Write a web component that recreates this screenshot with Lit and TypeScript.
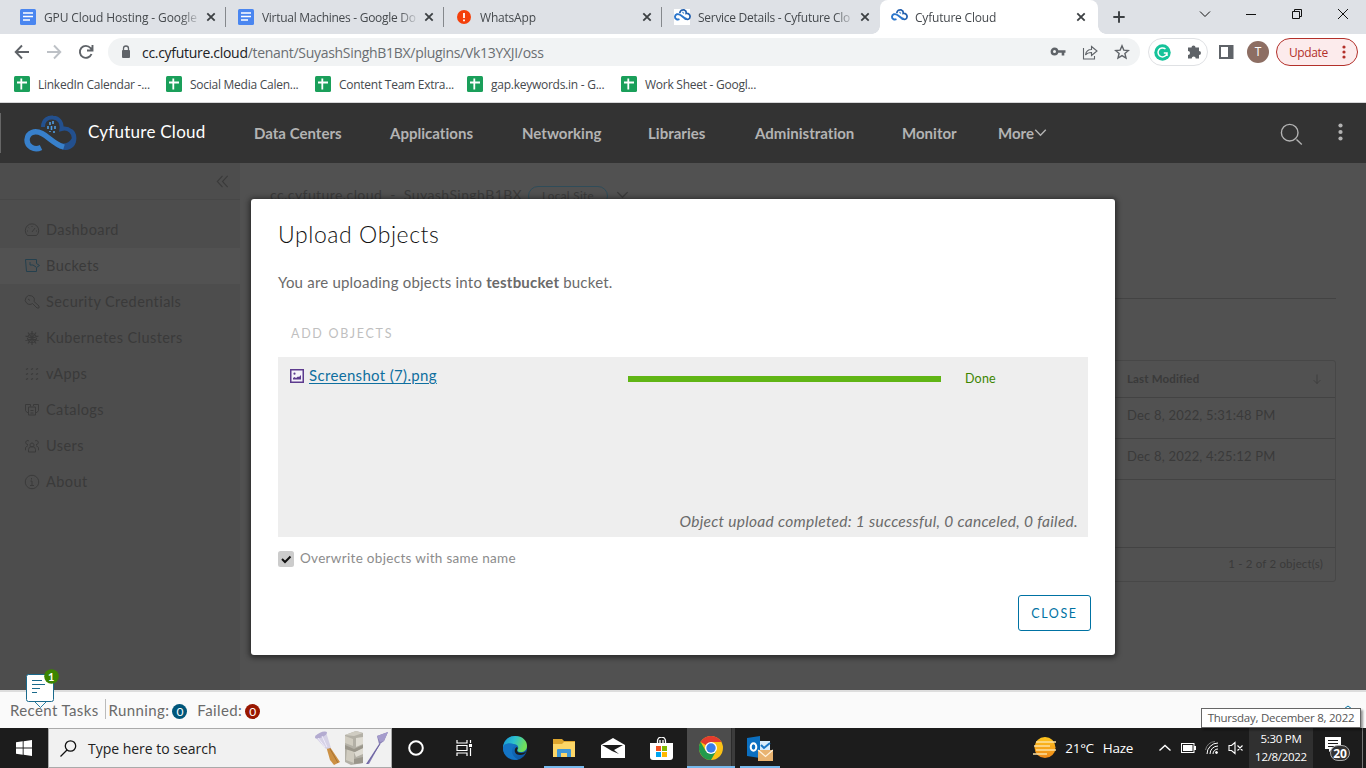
import { LitElement, css, html, svg } from "lit";
import { customElement, property } from "lit/decorators.js";
import { classMap } from "lit/directives/class-map.js";

const docsIcon = html`<svg width="16" height="16" viewBox="0 0 16 16">
	<rect width="16" height="16" rx="1.5" fill="#4a86f0" />
	<path d="M3 4h10M3 7.5h10M3 11h7" stroke="#fff" stroke-width="1.6" />
</svg>`;

const sheetsIcon = html`<svg width="16" height="16" viewBox="0 0 16 16">
	<rect width="16" height="16" rx="1.5" fill="#1a9f5a" />
	<path d="M3 6.5h10M7.3 2.5v11" stroke="#fff" stroke-width="1.8" />
</svg>`;

const alertIcon = html`<svg width="14" height="14" viewBox="0 0 14 14">
	<circle cx="7" cy="7" r="7" fill="#f4400b" />
	<path d="M7 3v5M7 9.6v1.6" stroke="#fff" stroke-width="1.8" />
</svg>`;

const cloudIcon = html`<svg width="17" height="16" viewBox="0 0 53 50">
	<path d="M18 13C19 4 26 2 32 3 37 5 39 9 38 14 46 13 51 18 50 25 49 33 42 34 34 30" fill="none" stroke="#2360ae" stroke-width="5.500" />
	<path d="M17 32C10 35 3 31 3 24 4 16 12 14 19 18 26 21 30 30 40 31" fill="none" stroke="#2b76cc" stroke-width="6" />
	<path d="M26 9l5 5" stroke="#5c98d8" stroke-width="4" />
</svg>`;

const logoIcon = html`<svg width="53" height="37" viewBox="0 0 53 37">
	<path d="M19 12C19 4 25 2 29 2.500 35 3 38.500 8 37.500 14 45 12 50.500 18 50 25 49 32 41 35 32 29" fill="none" stroke="#23508e" stroke-width="4" />
	<path d="M30 25C37 30 44 30 48 23 51 16 45 13 42 14 52 11 55 24 50 31 44 38 35 35 29 29Z" fill="#23508e" />
	<path d="M17 32.500C10 36 3 31 3 25 3.500 17 11 15 18 18.500 25 22 30 29 40 32" fill="none" stroke="#3880cb" stroke-width="5.400" />
	<path d="M26 7v3M29 6v3M24 11v3M27.500 11v4M31 11v3M26 16v1M30 16v2" stroke="#4e9be0" stroke-width="1.600" />
</svg>`;

const closeIcon = html`<svg width="10" height="10" viewBox="0 0 10 10">
	<path d="M1.300 1.300l7.400 7.400M8.700 1.300l-7.400 7.400" stroke="#3c4043" stroke-width="1.800" />
</svg>`;

const line = (d: string, size = 16, width = 1) => html`<svg width=${size} height=${size} viewBox="0 0 16 16"
	fill="none" stroke="currentColor" stroke-width=${width}>${svg`<path d=${d} />`}</svg>`;

const tabs = [
	{ title: "GPU Cloud Hosting - Google", icon: docsIcon, cls: "t1" },
	{ title: "Virtual Machines - Google Do", icon: docsIcon, cls: "t2" },
	{ title: "WhatsApp", icon: alertIcon, cls: "t3" },
	{ title: "Service Details - Cyfuture Clo", icon: cloudIcon, cls: "t4" },
	{ title: "Cyfuture Cloud", icon: cloudIcon, cls: "t5", active: true },
];

const bookmarks = [
	"LinkedIn Calendar -...",
	"Social Media Calen...",
	"Content Team Extra...",
	"gap.keywords.in - G...",
	"Work Sheet - Googl...",
];

const menu = [
	{ label: "Dashboard", icon: line("M3.500 13.500h9A6.700 6.700 0 1 0 3.500 13.500ZM8 10l3-4M3 9h1M12 9h1M8 4v1M4.500 5.500l.7.7") },
	{ label: "Buckets", icon: line("M1.500 1.500h11v4l3 2-3 2v4h-10L1.500 1.500ZM6 4v3h3l3 2"), active: true },
	{ label: "Security Credentials", icon: line("M8.500 9.500 13 14h2v-2L10 7.500A4.500 4.500 0 1 0 3 9.500C5 11 7 10.500 8.500 9.500ZM4 5l2 1.500") },
	{
		label: "Kubernetes Clusters",
		icon: line("M8 3.500a4.500 4.500 0 1 0 .01 0M8 1v14M1.500 6l13 4.500M1.500 10.500l13-4.500M4 2.500l8 11M12 2.500l-8 11", 16, 1.1),
	},
	{ label: "vApps", icon: line("M2 3.500l2-1M7 3.500l2-1M12 3.500l2-1M2 8.500l2-1M7 8.500l2-1M12 8.500l2-1M2 13.500l2-1M7 13.500l2-1M12 13.500l2-1", 16, 1.2) },
	{ label: "Catalogs", icon: line("M4 10.500H3l-1.500-2v-6h5v2M9.500 4V2.500h5v6l-1.500 2h-1M4.500 5h7v8h-7ZM6.500 8.500h3M6.500 11h3") },
	{ label: "Users", icon: line("M8 5a2 2 0 1 0 .01 0M4.500 14v-2.500a3.500 3 0 0 1 7 0V14ZM2 12H1.500V9.500L4 7.500M14 12h.5V9.500L12 7.500M4 6.500A2 2 0 1 1 5 3M12 6.500A2 2 0 1 0 11 3") },
	{ label: "About", icon: line("M8 1.300a6.700 6.700 0 1 0 .01 0M6.500 7H8v4.500M6 11.500h4M7.500 4v1.500") },
];

const objects = ["Dec 8, 2022, 5:31:48 PM", "Dec 8, 2022, 4:25:12 PM"];

@customElement("chrome-bar")
export class ChromeBar extends LitElement {
	static styles = css`
		:host {
			display: block;
			height: 103px;
			box-sizing: border-box;
			background: #fff;
			border-bottom: 1px solid #d6d6d8;
			font: 12px "Open Sans", "Noto Sans", sans-serif;
			color: #45494d;
		}

		svg {
			display: block;
			flex: none;
		}

		.tabs {
			display: flex;
			height: 34px;
			padding-left: 8px;
			background: #dee1e6;
		}

		.tab {
			display: flex;
			align-items: center;
			box-sizing: border-box;
			width: 218px;
			padding: 0 10px 0 12px;
			background: linear-gradient(#85888c, #85888c) right center / 1px 20px no-repeat;
		}

		.tab.t4 {
			background: none;
		}

		.t4 .icon {
			background: #fff;
		}

		.tab.active {
			position: relative;
			background: #fff;
			border-radius: 8px 8px 0 0;
			padding: 0 12px 0 11px;
		}

		.tab.active::before,
		.tab.active::after {
			content: "";
			position: absolute;
			bottom: 0;
			width: 8px;
			height: 8px;
		}

		.tab.active::before {
			left: -8px;
			background: radial-gradient(circle at 0 0, transparent 7.5px, #fff 8px);
		}

		.tab.active::after {
			right: -8px;
			background: radial-gradient(circle at 100% 0, transparent 7.5px, #fff 8px);
		}

		.icon {
			display: flex;
			justify-content: center;
			width: 16px;
			flex: none;
		}

		.title {
			flex: 1;
			margin: 0 3px 0 8px;
			overflow: hidden;
			white-space: nowrap;
			letter-spacing: -0.2px;
			-webkit-mask-image: linear-gradient(90deg, #000 86%, transparent 99%);
			mask-image: linear-gradient(90deg, #000 86%, transparent 99%);
		}

		.t1 .title {
			letter-spacing: -0.12px;
		}

		.t2 .title,
		.t4 .title {
			letter-spacing: -0.28px;
		}

		.plus {
			margin: 10px 0 0 14px;
			color: #3c4043;
		}

		.window {
			display: flex;
			gap: 30px;
			margin: 6px 15px 0 auto;
			color: #111;
		}

		.toolbar {
			display: flex;
			align-items: center;
			height: 36px;
			padding: 0 8px 0 14px;
			color: #5f6368;
		}

		.back {
			display: flex;
			gap: 16px;
			margin-right: 14px;
		}

		.off {
			color: #bdc1c6;
		}

		.address {
			display: flex;
			flex: none;
			align-items: center;
			box-sizing: border-box;
			width: 1032px;
			height: 28px;
			padding: 0 10px 0 12px;
			border-radius: 14px;
			background: #f1f3f4;
		}

		.url {
			margin-left: 10px;
			font-size: 14px;
			letter-spacing: -0.3px;
			color: #6a6e72;
		}

		.host {
			color: #202124;
		}

		.tools {
			display: flex;
			gap: 16px;
			margin-left: auto;
		}

		.extensions {
			display: flex;
			align-items: center;
			justify-content: space-between;
			box-sizing: border-box;
			width: 60px;
			height: 28px;
			margin: 0 11px 0 8px;
			padding: 0 5px 0 5px;
			border: 1px solid #dfe1e4;
			border-radius: 14px;
		}

		.avatar {
			width: 22px;
			margin: 0 7px 0 13px;
			border-radius: 50%;
			background: #8d6e63;
			color: #fff;
			line-height: 22px;
			text-align: center;
		}

		.update {
			display: flex;
			align-items: center;
			justify-content: space-between;
			box-sizing: border-box;
			width: 82px;
			height: 28px;
			padding: 0 11px 0 12px;
			border: 1px solid #b3302a;
			border-radius: 14px;
			background: #fcebec;
			color: #b3302a;
			letter-spacing: -0.4px;
		}

		.bookmarks {
			display: grid;
			grid-template-columns: 152px 149px 152px 154px auto;
			align-items: center;
			height: 28px;
			padding-left: 14px;
		}

		.bookmark {
			display: flex;
			align-items: center;
			gap: 8px;
			white-space: nowrap;
			letter-spacing: -0.26px;
		}
	`;

	render() {
		return html`
			<div class="tabs">
				${tabs.map(
					(tab) => html`<div class=${classMap({ tab: true, active: !!tab.active, [tab.cls]: true })}>
						<span class="icon">${tab.icon}</span>
						<span class="title">${tab.title}</span>
						${closeIcon}
					</div>`
				)}
				<span class="plus">${line("M8 1.500v13M1.500 8h13", 14, 2.2)}</span>
				<div class="window">
					${line("M3 5.500l5 5 5-5")}${line("M3 8.500h10")}
					${line("M3.500 5.500h7v7h-7ZM5.500 5.500v-2h7v7h-2")}${line("M3 3l10 10M13 3 3 13")}
				</div>
			</div>
			<div class="toolbar">
				<div class="back">
					${line("M15 8H2M8 1.500 1.700 8 8 14.500", 16, 1.9)}
					<span class="off">${line("M1 8h13M8 1.500 14.300 8 8 14.500", 16, 1.9)}</span>
					${line("M13.500 10A6 6 0 1 1 12.500 4L14 5.500M14.500 1v5.500H9", 16, 1.9)}
				</div>
				<div class="address">
					<svg width="12" height="14" viewBox="0 0 12 14">
						<rect x="2" y="5" width="8" height="8" rx="1" fill="#5f6368" />
						<path d="M3.500 6V3.500a2.500 2.500 0 0 1 5 0V6" fill="none" stroke="#5f6368" stroke-width="1.300" />
					</svg>
					<span class="url"><span class="host">cc.cyfuture.cloud</span>/tenant/SuyashSinghB1BX/plugins/Vk13YXJI/oss</span>
					<div class="tools">
						<svg width="16" height="16" viewBox="0 0 16 16" fill="none" stroke="currentColor">
							<circle cx="4.500" cy="7.500" r="2.700" stroke-width="2.400" />
							<path d="M7 7.500h8.500M13 7.500v4" stroke-width="2.600" />
						</svg>
						${line("M1.500 4v11h11v-3M3.500 11C4 7.500 6 5.500 9.500 5.500V2.500L15 7l-5.500 4.500V8.500C7 8.500 5 9 3.500 11Z", 16, 1.1)}
						${line("M8 1.800l1.800 4.300 4.600.4-3.500 3 1.100 4.600L8 11.600l-4 2.500 1.100-4.600-3.500-3 4.600-.4Z", 16, 1.4)}
					</div>
				</div>
				<div class="extensions">
					<svg width="17" height="17" viewBox="0 0 17 17">
						<circle cx="8.500" cy="8.500" r="8.200" fill="#15c39a" />
						<path d="M11.500 5A4.500 4.500 0 1 0 13 9H9.800M13 9v3" fill="none" stroke="#fff" stroke-width="1.500" />
					</svg>
					<svg width="16" height="16" viewBox="0 0 16 16" fill="currentColor">
						<path d="M2 3.500h3.500a2 2 0 1 1 4 0H13V7a2 2 0 1 1 0 4v3.500H9.700a2 2 0 1 0-4 0H2V11a2 2 0 1 0 0-4Z" />
					</svg>
				</div>
				<svg width="15" height="14" viewBox="0 0 15 14">
					<rect x="1" y="1" width="12.500" height="12" fill="none" stroke="#5f6368" stroke-width="2" />
					<path d="M9 1h5v12H9z" fill="#5f6368" />
				</svg>
				<span class="avatar">T</span>
				<div class="update">
					Update
					<svg width="4" height="14" viewBox="0 0 4 14" fill="currentColor">
						<circle cx="2" cy="2" r="1.600" /><circle cx="2" cy="7" r="1.600" /><circle cx="2" cy="12" r="1.600" />
					</svg>
				</div>
			</div>
			<div class="bookmarks">
				${bookmarks.map((label) => html`<div class="bookmark">${sheetsIcon}${label}</div>`)}
			</div>
		`;
	}
}

@customElement("upload-dialog")
export class UploadDialog extends LitElement {
	@property() bucket = "testbucket";
	@property() file = "Screenshot (7).png";
	@property({ type: Number }) progress = 100;

	static styles = css`
		:host {
			display: flex;
			flex-direction: column;
			box-sizing: border-box;
			width: 864px;
			height: 456px;
			padding: 20px 24px 24px 27px;
			border-radius: 3px;
			background: #fff;
			box-shadow: 0 1px 5px 2px rgba(20, 20, 20, 0.6);
			color: #6a6a6a;
			font-size: 15px;
		}

		h1 {
			margin: 0;
			color: #111;
			font-size: 23px;
			font-weight: 300;
			line-height: 30px;
			letter-spacing: 0.58px;
		}

		p {
			margin: 23px 0 0;
			line-height: 20px;
			letter-spacing: 0.2px;
		}

		.add {
			margin: 32px 0 0 13px;
			color: #bfbfbf;
			font-size: 12.5px;
			line-height: 20px;
			letter-spacing: 1.7px;
		}

		.files {
			display: flex;
			flex-direction: column;
			justify-content: space-between;
			box-sizing: border-box;
			width: 810px;
			height: 180px;
			margin-top: 13px;
			padding: 9px 10px 6px 12px;
			background: #eee;
		}

		.row {
			display: grid;
			grid-template-columns: 338px 313px auto;
			align-items: center;
			height: 22px;
		}

		.name {
			display: flex;
			align-items: center;
			gap: 5px;
			margin-top: -3px;
			color: #0f6f9f;
			line-height: 19px;
			letter-spacing: 0.33px;
		}

		.link {
			text-decoration: underline;
			text-underline-offset: 2px;
		}

		.track {
			height: 6px;
			margin-top: 3px;
		}

		.bar {
			height: 6px;
			background: #60b515;
		}

		.done {
			margin: 2px 0 0 24px;
			color: #3c8500;
			font-size: 12.5px;
			letter-spacing: 0.2px;
		}

		.summary {
			font-size: 15.5px;
			font-style: italic;
			line-height: 20px;
			letter-spacing: 0.29px;
			text-align: right;
		}

		.option {
			display: flex;
			align-items: center;
			gap: 6px;
			height: 16px;
			margin-top: 14px;
			color: #8c8c8c;
			font-size: 13.5px;
			line-height: 14px;
			letter-spacing: 0.31px;
		}

		.label {
			padding-bottom: 2px;
		}

		.close {
			align-self: flex-end;
			width: 73px;
			height: 36px;
			margin-top: auto;
			padding: 1px 0 0;
			border: 1px solid #0072a3;
			border-radius: 3px;
			background: #fff;
			color: #0072a3;
			font: 12.5px Lato, sans-serif;
			letter-spacing: 1.6px;
		}
	`;

	render() {
		return html`
			<h1>Upload Objects</h1>
			<p>You are uploading objects into <b>${this.bucket}</b> bucket.</p>
			<div class="add">ADD OBJECTS</div>
			<div class="files">
				<div class="row">
					<div class="name">
						<svg width="14" height="14" viewBox="0 0 14 14">
							<rect x=".750" y=".750" width="12.500" height="12.500" fill="#f6f2fa" stroke="#5d3b8e" stroke-width="1.500" />
							<path d="M3 10.500V9l1.500-1L6 9l2-1.500 1 .5 2-2v4.500Z" fill="#5d3b8e" />
							<circle cx="4.500" cy="4.700" r="1.100" fill="#5d3b8e" />
						</svg>
						<span class="link">${this.file}</span>
					</div>
					<div class="track"><div class="bar" style="width: ${this.progress}%"></div></div>
					<div class="done">Done</div>
				</div>
				<div class="summary">Object upload completed: 1 successful, 0 canceled, 0 failed.</div>
			</div>
			<div class="option">
				<svg width="16" height="16" viewBox="0 0 16 16">
					<rect width="16" height="16" rx="2.500" fill="#ccc" />
					<path d="M4 8l3 3 5.500-5.500" fill="none" stroke="#111" stroke-width="2" />
				</svg>
				<span class="label">Overwrite objects with same name</span>
			</div>
			<button class="close">CLOSE</button>
		`;
	}
}

@customElement("task-bar")
export class TaskBar extends LitElement {
	static styles = css`
		:host {
			display: flex;
			height: 40px;
			background: #1c1c1c;
			color: #fff;
			font: 12px "Open Sans", "Noto Sans", sans-serif;
		}

		svg {
			display: block;
			flex: none;
		}

		.start {
			display: grid;
			place-items: center;
			width: 48px;
		}

		.search {
			display: flex;
			align-items: center;
			box-sizing: border-box;
			width: 344px;
			padding: 0 3px 0 11px;
			border: 1px solid #aaa;
			background: #f1f1f1;
			color: #222;
			font-size: 14px;
		}

		.hint {
			margin: 0 auto 0 11px;
			letter-spacing: -0.02px;
		}

		.apps {
			display: grid;
			grid-template-columns: 48px 48px 54px 44px 54px 43px 56px 42px;
			width: 389px;
		}

		.app {
			display: grid;
			place-items: center;
		}

		.open {
			justify-self: center;
			width: 40px;
			box-shadow: inset 0 -2px #76b9ed;
		}

		.current {
			justify-self: center;
			width: 48px;
			background: linear-gradient(90deg, #4c4c4c 44px, #2b2b2b 44px, #2b2b2b 45px, #3c3c3c 45px);
			box-shadow: inset 0 -2px #76b9ed;
		}

		.tray {
			display: flex;
			align-items: center;
			margin-left: auto;
		}

		.weather {
			display: flex;
			gap: 9px;
			margin: 0 25px 0 8px;
			font-size: 13.5px;
			letter-spacing: -0.3px;
		}

		.indicators {
			display: flex;
			align-items: center;
			gap: 9px;
			margin-right: 5px;
		}

		.clock {
			width: 64px;
			height: 40px;
			box-sizing: border-box;
			padding-top: 2px;
			background: #303030;
			font-size: 11.5px;
			line-height: 18px;
			letter-spacing: -0.3px;
			text-align: center;
		}

		.notices {
			margin: 0 9px 0 11px;
		}

		.desktop {
			width: 4px;
			height: 40px;
			border-left: 1px solid #777;
			box-sizing: border-box;
		}
	`;

	render() {
		return html`
			<div class="start">
				<svg width="16" height="16" viewBox="0 0 16 16" fill="#fff">
					<path d="M0 2.300 6.700 1.300v6.300H0ZM7.600 1.200 16 0v7.600H7.600ZM0 8.500h6.700v6.300L0 13.800ZM7.600 8.500H16V16l-8.400-1.200Z" />
				</svg>
			</div>
			<div class="search">
				<svg width="17" height="17" viewBox="0 0 17 17" fill="none" stroke="#111" stroke-width="1.300">
					<circle cx="10.500" cy="6" r="5.200" /><path d="M7 10 .5 16.500" />
				</svg>
				<span class="hint">Type here to search</span>
				<svg width="74" height="36" viewBox="0 0 74 36">
					<path d="M12 16l4 1 10 15-6 3-4-5Z" fill="#cc9144" /><path d="M15 17l9 16" stroke="#a87435" />
					<path d="M1 7 12 2l5 16-5 1Z" fill="#d6d2e6" /><ellipse cx="7" cy="5" rx="6.500" ry="2.500" transform="rotate(-24 7 5)" fill="#b3abd0" />
					<path d="m4 8 7 9M8 6l5 11" stroke="#eeeafa" />
					<path d="M31 5 42 1l7 2v30l-12 2-6-3Z" fill="#b3b0a6" /><path d="M31 5 42 1l7 2-9 3Z" fill="#cfccc2" />
					<path d="M31 6l8 3v7l-8-3ZM33 18l7 4v11l-8-3Z" fill="#d0ccc0" /><path d="M42 8l7-1v7l-7 3ZM40 22l9-4v6l-7 3Z" fill="#dedbd2" />
					<path d="M31 15l9 4 9-4v3l-8 4-10-3ZM40 29l9-2v6l-9 1Z" fill="#9a968b" />
					<path d="M52 34 65 14l-2-8 11-4-4 9-4 3-11 20Z" fill="#8a81b6" /><path d="M63 6l11-4-4 9-4 1Z" fill="#a59ccc" />
					<path d="M53 34l13-20" stroke="#6c63a0" />
				</svg>
			</div>
			<div class="apps">
				<div class="app">
					<svg width="18" height="18" viewBox="0 0 18 18"><circle cx="9" cy="9" r="6.800" fill="none" stroke="#fff" stroke-width="2" /></svg>
				</div>
				<div class="app">
					<svg width="17" height="16" viewBox="0 0 17 16" fill="none" stroke="#fff" stroke-width="1.200">
						<path d="M1 0v3h10V0M1 16v-3h10v3M1 5.500h10v5H1ZM14.500 0v3M14.500 8v8" /><path d="M13 4h3v3h-3z" fill="#fff" stroke="none" />
					</svg>
				</div>
				<div class="app">
					<svg width="24" height="24" viewBox="0 0 24 24">
						<defs>
							<linearGradient id="edge" x1="0" y1="0" x2="1" y2=".3"><stop offset="0" stop-color="#1593d3" /><stop offset=".5" stop-color="#2cc0cf" /><stop offset="1" stop-color="#71df59" /></linearGradient>
							<linearGradient id="deep" x1="0" y1="0" x2="1" y2="1"><stop offset="0" stop-color="#1684d4" /><stop offset="1" stop-color="#0c4f9c" /></linearGradient>
						</defs>
						<circle cx="12" cy="12" r="12" fill="url(#deep)" />
						<path d="M0 11C1 4 6 0 12 0c8 0 12 5 12 10 0 4-3 6-6 6-4 0-4-2-3-3 1-3-1-5-5-5-5 0-9 2-10 3Z" fill="url(#edge)" />
						<path d="M15 12c-2 2-1 5 3 5 3 0 4-1 5.500-2C22 18 20 19 17 19c-4 0-6-3-5-6 1-2 2-2 3-1Z" fill="#1c1c1c" />
						<path d="M1 9C5 6 12 7 12 10 7 13 8 20 15 23.500 7 25 0 19 0 12Z" fill="#1474c4" />
					</svg>
				</div>
				<div class="app open">
					<svg width="22" height="19" viewBox="0 0 22 19">
						<path d="M0 0h9l2 2h11v16H0Z" fill="#dda52e" /><path d="M0 5h9l2-2h11v15H0Z" fill="#fcd667" />
						<path d="M4 18v-7q0-1 1-1h12q1 0 1 1v7h-4v-4H8v4Z" fill="#3f97d6" />
					</svg>
				</div>
				<div class="app">
					<svg width="24" height="20" viewBox="0 0 24 20">
						<path d="M0 7 12 0l12 7v13H0Z" fill="#fff" /><path d="M1 7h21l-9 5 5 4-7-3Z" fill="#1c1c1c" />
					</svg>
				</div>
				<div class="app">
					<svg width="23" height="23" viewBox="0 0 23 23">
						<path d="M7.500 6V4a4 4 0 0 1 8 0v2M10 6V3M13 6V3" fill="none" stroke="#fff" stroke-width="1.300" />
						<path d="M0 6h23v14q0 3-3 3H3q-3 0-3-3Z" fill="#fff" />
						<path d="M6 9h5v5H6Z" fill="#f25022" /><path d="M12 9h5v5h-5Z" fill="#7fba00" />
						<path d="M6 15h5v5H6Z" fill="#00a4ef" /><path d="M12 15h5v5h-5Z" fill="#ffb900" />
					</svg>
				</div>
				<div class="app current">
					<svg width="24" height="24" viewBox="0 0 24 24">
						<circle cx="12" cy="12" r="12" fill="#fbc116" />
						<path d="M12 12 1.600 6A12 12 0 0 1 22.400 6H12Z" fill="#e33b2e" />
						<path d="M1.600 6A12 12 0 0 0 12 24l5.200-9L12 12 6.800 15Z" fill="#229a4c" />
						<circle cx="12" cy="12" r="6" fill="#fff" /><circle cx="12" cy="12" r="4.700" fill="#3a7dea" />
					</svg>
				</div>
				<div class="app open">
					<svg width="26" height="25" viewBox="0 0 26 25">
						<path d="M12 5h11v9H12Z" fill="#d8ebfa" /><path d="M14 9l3 3 6-5" fill="none" stroke="#1976c5" stroke-width="2" />
						<path d="M0 2 13 0v22L0 20Z" fill="#0b6fc0" /><ellipse cx="6.500" cy="11" rx="2.800" ry="3.700" fill="none" stroke="#fff" stroke-width="2" />
						<path d="M11 14h15v11H11Z" fill="#e9b370" /><path d="m11 14 7.500 6.500L26 14" fill="none" stroke="#fff1da" stroke-width="1.300" />
					</svg>
				</div>
			</div>
			<div class="tray">
				<svg width="24" height="22" viewBox="0 0 24 22">
					<defs><linearGradient id="sun" x1="0" y1="0" x2="0" y2="1"><stop offset="0" stop-color="#fec51d" /><stop offset="1" stop-color="#ef8818" /></linearGradient></defs>
					<circle cx="12" cy="10.500" r="10.500" fill="url(#sun)" />
					<path d="M3 5h20M1 9h16M3 13h20M0 17h14" stroke="#fde0a0" stroke-width="1.600" />
				</svg>
				<div class="weather"><span>21°C</span><span>Haze</span></div>
				<div class="indicators">
					<svg width="14" height="14" viewBox="0 0 14 14"><path d="m1.500 9.500 5.500-5 5.500 5" fill="none" stroke="#fff" stroke-width="1.400" /></svg>
					<svg width="15" height="10" viewBox="0 0 15 10"><rect x=".5" y=".5" width="12.500" height="9" fill="none" stroke="#fff" /><path d="M2 2h9.500v6H2ZM13 3h2v4h-2Z" fill="#fff" /></svg>
					<svg width="14" height="14" viewBox="0 0 14 14" fill="none" stroke="#fff">
						<path d="M2 13A11 11 0 0 1 13 2M5 13a8 8 0 0 1 8-8M8 13a5 5 0 0 1 5-5" /><circle cx="11.500" cy="11.500" r="1" fill="#fff" /><path d="M.5 9A10 10 0 0 1 10 .5" stroke="#777" />
					</svg>
					<svg width="16" height="14" viewBox="0 0 16 14" fill="none" stroke="#fff" stroke-width="1.100"><path d="M1 4.500h2.500L7 1.500v11l-3.500-3H1ZM9.500 4.500l5 5M14.500 4.500l-5 5" /></svg>
				</div>
				<div class="clock">5:30 PM<br />12/8/2022</div>
				<svg class="notices" width="29" height="26" viewBox="0 0 29 26">
					<path d="M1 2h16v12H9l-4 3v-3H1Z" fill="#fff" /><path d="M4 5.500h10M4 8.500h10M4 11.500h8" stroke="#1c1c1c" />
					<rect x="6.500" y="10.500" width="19" height="15" rx="7.500" fill="#333" stroke="#aaa" />
					<text x="16" y="22.500" font-size="12" font-weight="700" text-anchor="middle" fill="#fff">20</text>
				</svg>
				<div class="desktop"></div>
			</div>
		`;
	}
}

@customElement("app-root")
export class AppRoot extends LitElement {
	static styles = css`
		:host {
			position: relative;
			display: flex;
			flex-direction: column;
			width: 1366px;
			height: 768px;
			overflow: hidden;
			background: #515151;
			font-family: Lato, sans-serif;
		}

		svg {
			display: block;
			flex: none;
		}

		header {
			display: flex;
			align-items: center;
			height: 60px;
			background: #333;
			color: #b3b3b3;
		}

		.edge {
			width: 1px;
			height: 40px;
			margin-right: 23px;
			background: #666;
		}

		.brand {
			width: 166px;
			margin: -3px 0 0 11px;
			color: #fff;
			font-size: 17px;
			letter-spacing: 0.25px;
		}

		nav {
			display: grid;
			grid-template-columns: 136px 132px 126px 107px 147px 96px auto;
			margin-top: -1px;
			font-size: 15px;
			font-weight: 700;
			letter-spacing: 0.02px;
		}

		.more {
			display: flex;
			align-items: center;
		}

		.search {
			margin: 3px 35px 0 auto;
		}

		.dots {
			margin: -3px 23px 0 0;
		}

		main {
			display: flex;
			height: 527px;
			color: #3a3a3a;
			font-size: 14.5px;
		}

		aside {
			width: 240px;
			background: #4d4d4d;
		}

		.collapse {
			display: flex;
			align-items: center;
			justify-content: flex-end;
			box-sizing: border-box;
			height: 37px;
			margin-bottom: 12px;
			padding-right: 10px;
			border-bottom: 1px solid #474747;
		}

		.item {
			display: flex;
			align-items: center;
			box-sizing: border-box;
			gap: 6px;
			height: 36px;
			padding: 0 0 1px 24px;
			letter-spacing: 0.42px;
		}

		.item.active {
			background: #525252;
		}

		.item.active svg {
			color: #24404e;
		}

		.content {
			flex: 1;
			padding: 21px 30px 0;
		}

		.context {
			display: flex;
			align-items: center;
			height: 21px;
			font-size: 14px;
			letter-spacing: 0.42px;
			white-space: pre;
		}

		.site {
			box-sizing: border-box;
			width: 80px;
			height: 20px;
			margin: 2px 7px 0 6px;
			border: 1px solid #2f4c59;
			border-radius: 10px;
			font-size: 11.5px;
			line-height: 18px;
			text-align: center;
		}

		.rule {
			height: 1px;
			margin-top: 93px;
			background: #434343;
		}

		.grid {
			height: 222px;
			margin-top: 61px;
			box-sizing: border-box;
			border: 1px solid #474747;
			border-radius: 3px;
		}

		.head,
		.row,
		.foot {
			display: flex;
			align-items: center;
			box-sizing: border-box;
			padding: 0 12px 0 856px;
		}

		.head {
			justify-content: space-between;
			height: 37px;
			padding-bottom: 1px;
			border-bottom: 1px solid #434343;
			font-size: 11.5px;
			font-weight: 700;
			letter-spacing: 0.15px;
		}

		.row {
			height: 41px;
			border-bottom: 1px solid #434343;
			padding-bottom: 6px;
			font-size: 13px;
			letter-spacing: 0.2px;
			white-space: nowrap;
		}

		.foot {
			justify-content: flex-end;
			height: 34px;
			margin-top: 67px;
			padding-bottom: 3px;
			border-top: 1px solid #434343;
			font-size: 11.5px;
			letter-spacing: 0.17px;
		}

		footer {
			display: flex;
			align-items: center;
			box-sizing: border-box;
			height: 38px;
			padding: 0 0 0 10px;
			border-top: 2px solid #ddd;
			background: #fafafa;
			color: #6a6a6a;
			font-size: 15px;
			letter-spacing: 0.38px;
		}

		.split {
			width: 1px;
			height: 20px;
			margin: -3px 3px 0 6px;
			background: #bbb;
		}

		.count {
			width: 15px;
			height: 15px;
			margin: 2px 10px 0 3px;
			border-radius: 50%;
			background: #00567a;
			color: #fff;
			font-size: 12px;
			line-height: 15px;
			letter-spacing: 0;
			text-align: center;
		}

		.count.failed {
			background: #991700;
		}

		upload-dialog {
			position: absolute;
			left: 251px;
			top: 199px;
		}

		.chat {
			position: absolute;
			left: 23px;
			top: 666px;
		}

		.tooltip {
			position: absolute;
			left: 1201px;
			top: 708px;
			box-sizing: border-box;
			width: 160px;
			height: 20px;
			border: 1px solid #666;
			background: #fff;
			box-shadow: 2px 2px 2px rgba(0, 0, 0, 0.4);
			color: #555;
			font: 11.5px/18px "Open Sans", "Noto Sans", sans-serif;
			letter-spacing: -0.25px;
			text-align: center;
			white-space: nowrap;
		}

		.hint {
			position: absolute;
			left: 1343px;
			top: 704px;
		}
	`;

	render() {
		return html`
			<chrome-bar></chrome-bar>
			<header>
				<span class="edge"></span>
				${logoIcon}
				<span class="brand">Cyfuture Cloud</span>
				<nav>
					<span>Data Centers</span>
					<span>Applications</span>
					<span>Networking</span>
					<span>Libraries</span>
					<span>Administration</span>
					<span>Monitor</span>
					<span class="more">More ${line("M1.500 4.500 8 11.500l6.500-7", 13, 1.7)}</span>
				</nav>
				<svg class="search" width="23" height="23" viewBox="0 0 23 23" fill="none" stroke="#b3b3b3" stroke-width="1.400">
					<circle cx="9.700" cy="9.700" r="8.300" /><path d="m16.500 16.500 5.300 5" />
				</svg>
				<svg class="dots" width="5" height="18" viewBox="0 0 5 18" fill="#b3b3b3">
					<circle cx="2.500" cy="2.500" r="2.100" /><circle cx="2.500" cy="9" r="2.100" /><circle cx="2.500" cy="15.500" r="2.100" />
				</svg>
			</header>
			<main>
				<aside>
					<div class="collapse">${line("M8 2 2.500 8 8 14M13.500 2 8 8l5.500 6", 15, 1.2)}</div>
					${menu.map(
						(entry) => html`<div class=${classMap({ item: true, active: !!entry.active })}>${entry.icon}${entry.label}</div>`
					)}
				</aside>
				<div class="content">
					<div class="context">cc.cyfuture.cloud  -  SuyashSinghB1BX<span class="site">Local Site</span>${line("M2.500 5.500 8 11l5.500-5.500", 15, 1.4)}</div>
					<div class="rule"></div>
					<div class="grid">
						<div class="head">Last Modified ${line("M8 2v12M3.500 9.500 8 14l4.500-4.500", 12)}</div>
						${objects.map((date) => html`<div class="row">${date}</div>`)}
						<div class="foot">1 - 2 of 2 object(s)</div>
					</div>
				</div>
			</main>
			<footer>
				<span>Recent Tasks</span>
				<span class="split"></span>
				<span>Running:</span>
				<span class="count">0</span>
				<span>Failed:</span>
				<span class="count failed">0</span>
			</footer>
			<task-bar></task-bar>
			<upload-dialog></upload-dialog>
			<svg class="chat" width="38" height="45" viewBox="0 0 38 45">
				<path d="M5.500 8.500h23q2 0 2 2v23q0 2-2 2h-23q-2 0-2-2v-23q0-2 2-2Z" fill="#fff" stroke="#1a6a8c" />
				<path d="M12 36l5.500 5.500L23 36" fill="none" stroke="#2a7fa3" />
				<path d="M9 14.500h10M9 18.500h13M9 22.500h8M9 26.500h5" stroke="#1a6a8c" />
				<circle cx="28.500" cy="10.500" r="7.300" fill="#3c8500" />
				<text x="28.300" y="14.500" font-size="11" font-weight="700" text-anchor="middle" fill="#fff">1</text>
			</svg>
			<svg class="hint" width="10" height="6" viewBox="0 0 10 6"><path d="M1 5l4-3 4 3" fill="none" stroke="#0072a3" /></svg>
			<div class="tooltip">Thursday, December 8, 2022</div>
		`;
	}
}
